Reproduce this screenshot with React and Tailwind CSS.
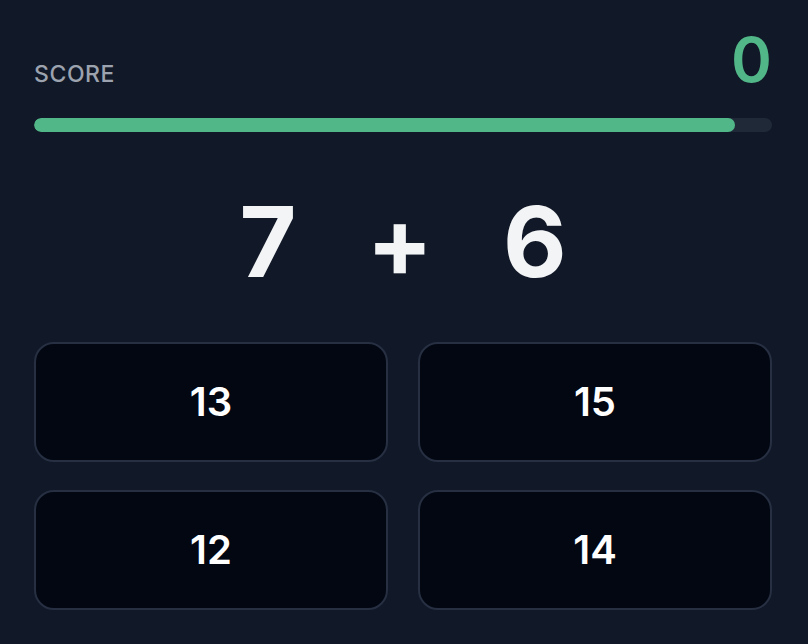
import React from "react";

export default function App() {
  const options = [13, 15, 12, 14];
  return (
    <div
      className="min-h-screen w-full bg-[#111827] pl-[34px] pr-[36px] pt-[29px]"
      style={{ fontFamily: "Inter, 'Noto Sans', sans-serif" }}
    >
      <div className="flex items-baseline justify-between">
        <span className="text-[23px] font-medium tracking-wide text-[#9ca3af]">SCORE</span>
        <span className="text-[62px] font-semibold leading-none text-[#52b788]">0</span>
      </div>
      <div className="mt-[26px] h-[14px] w-full overflow-hidden rounded-full bg-[#1f2937]">
        <div className="h-full rounded-full bg-[#52b788]" style={{ width: "95%" }} />
      </div>
      <div className="mt-[61px] flex items-center justify-center gap-[70px] text-[98px] font-bold leading-none text-[#f3f4f6]">
        <span>7</span>
        <span>+</span>
        <span>6</span>
      </div>
      <div className="mt-[51px] grid grid-cols-2 gap-x-[30px] gap-y-[28px]">
        {options.map((o) => (
          <button
            key={o}
            className="flex h-[120px] items-center justify-center rounded-[20px] border-2 border-[#263042] bg-[#030712] text-[40px] font-semibold text-white"
          >
            {o}
          </button>
        ))}
      </div>
    </div>
  );
}
